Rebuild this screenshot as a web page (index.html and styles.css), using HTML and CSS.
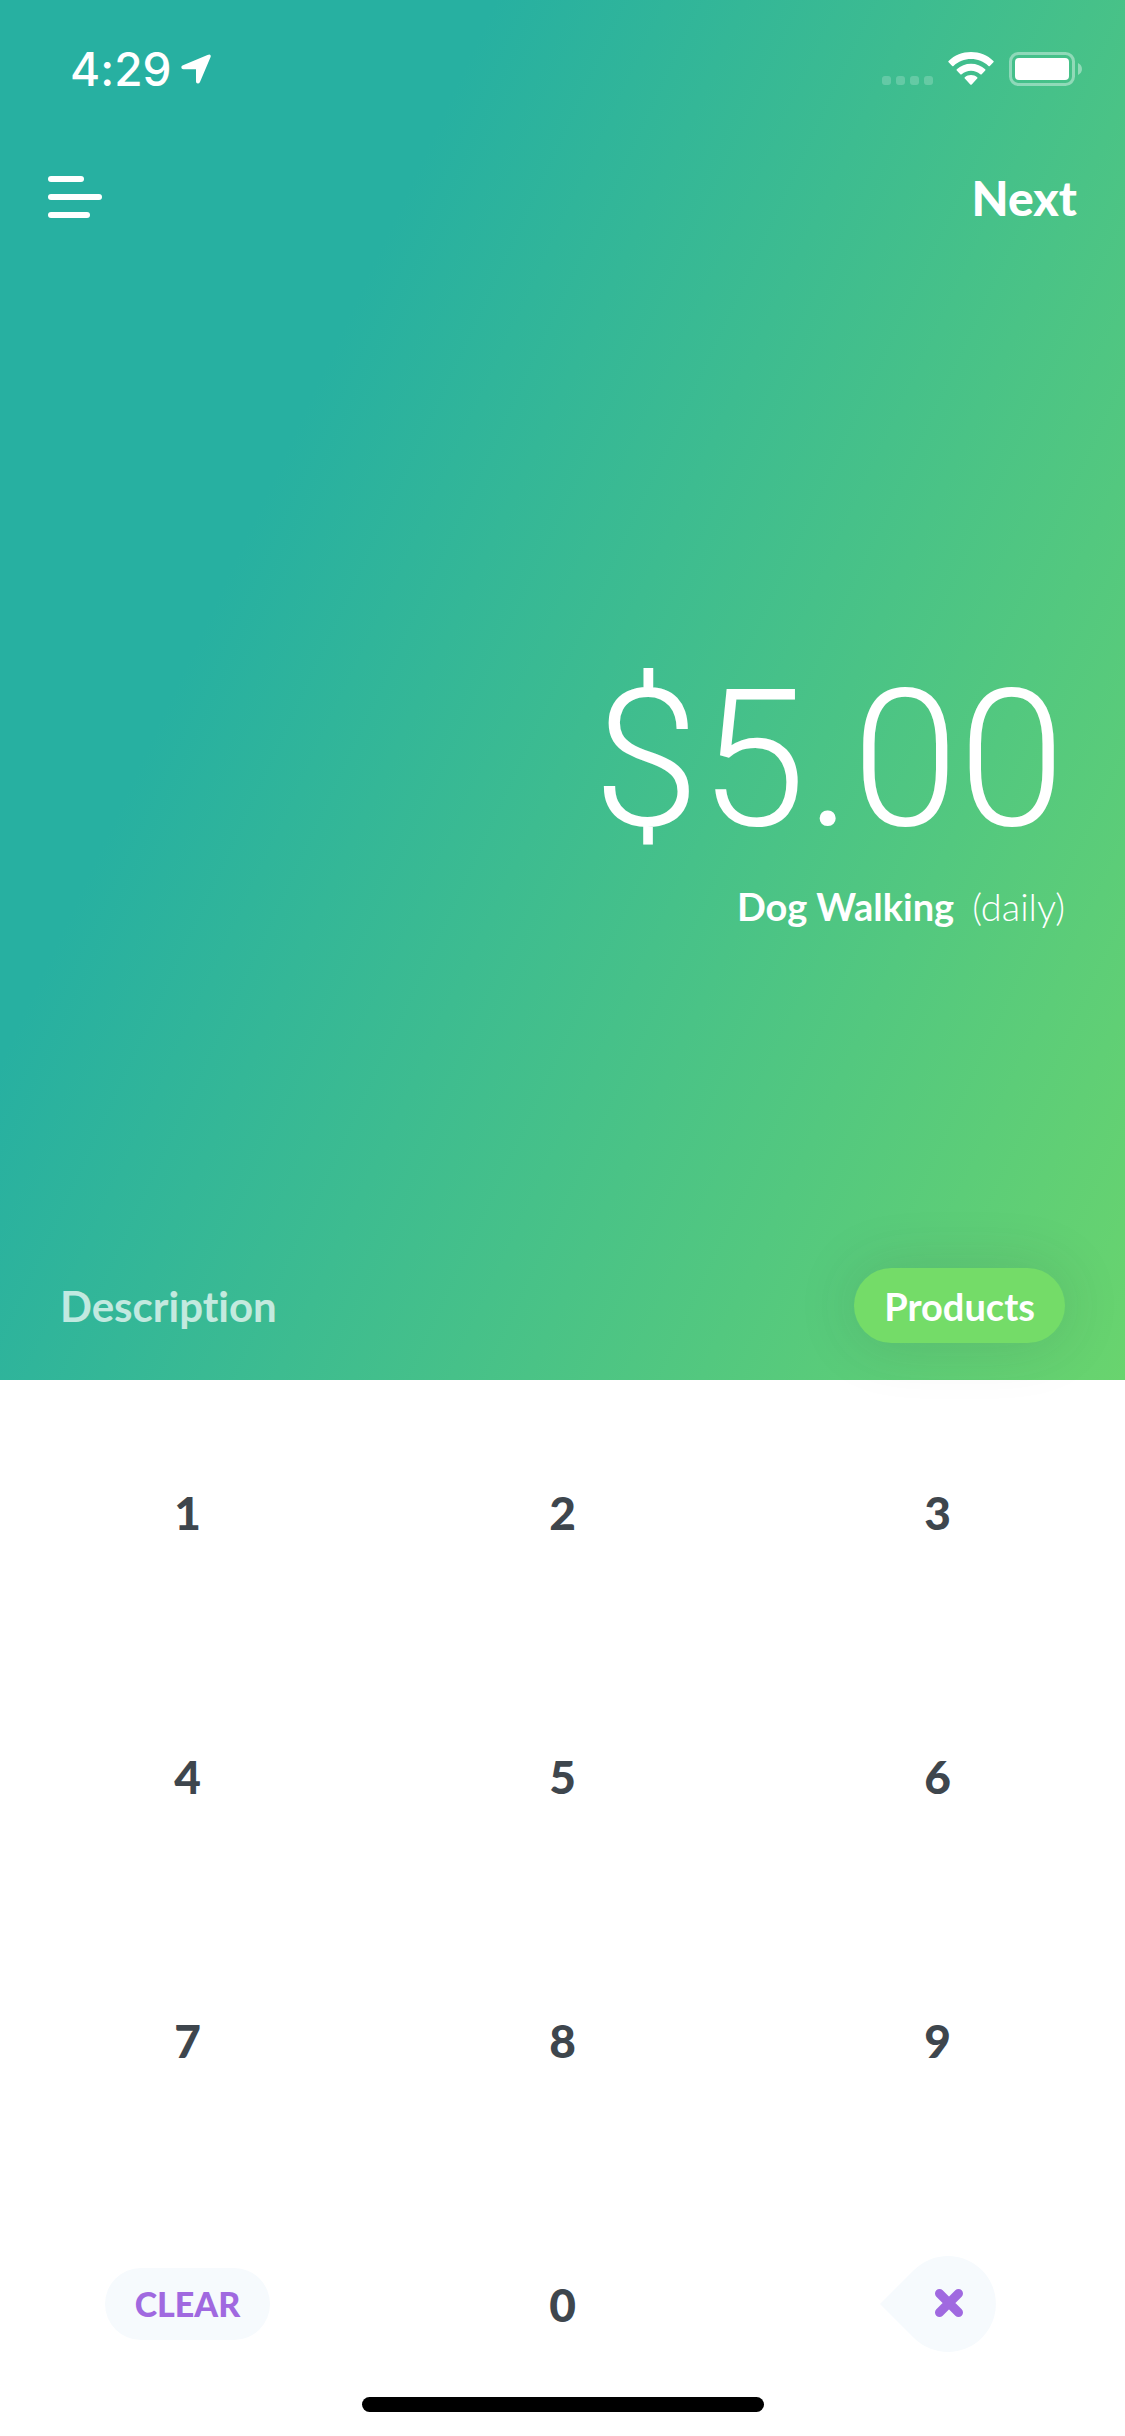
FILE: index.html
```html
<!DOCTYPE html>
<html lang="en">

<head>
  <meta charset="UTF-8">
  <meta name="viewport" content="width=device-width, initial-scale=1.0">
  <title>New Charge</title>
  <link rel="stylesheet" href="styles.css">
</head>

<body>
  <main id="hero">
    <div id="status-bar">
      <div class="status-left">
        <span class="time">4:29</span>
        <svg width="30" height="30" viewBox="0 0 30 30">
          <path d="M28.400 0.400 Q30.200 0.600 29.600 3 L19 28 Q18.300 29.600 16.800 29.600 Q15 29.400 15 27.400 L15 15.200 L2.400 15.200 Q0.300 15 0.300 13.200 Q0.300 11.900 2 11.200 L26.500 0.900 Q27.600 0.400 28.400 0.400 Z" fill="#fff"/>
        </svg>
      </div>
      <div class="status-right">
        <svg width="51" height="34" viewBox="0 0 51 34" fill="#fff" fill-opacity="0.2">
          <rect x="0" y="24" width="9" height="9" rx="3"/>
          <rect x="14" y="24" width="9" height="9" rx="3"/>
          <rect x="28" y="24" width="9" height="9" rx="3"/>
          <rect x="42" y="24" width="9" height="9" rx="3"/>
        </svg>
        <svg width="46" height="34" viewBox="0 0 46 34" fill="#fff">
          <path d="M23 0 C31.500 0 39.500 3.200 45.400 8.900 Q46.100 9.600 45.400 10.300 L41.800 13.900 Q41.200 14.500 40.500 13.900 C35.700 9.400 29.500 7 23 7 C16.500 7 10.300 9.400 5.500 13.900 Q4.800 14.500 4.200 13.900 L0.600 10.300 Q-0.100 9.600 0.600 8.900 C6.500 3.200 14.500 0 23 0 Z"/>
          <path d="M23 11.700 C28.400 11.700 33.400 13.700 37.200 17.200 Q37.900 17.900 37.200 18.600 L33.700 22.200 Q33 22.800 32.300 22.200 C29.700 19.900 26.500 18.700 23 18.700 C19.500 18.700 16.300 19.900 13.700 22.200 Q13 22.800 12.300 22.200 L8.800 18.600 Q8.100 17.900 8.800 17.200 C12.600 13.700 17.600 11.700 23 11.700 Z"/>
          <path d="M23 23 C25.400 23 27.500 23.800 29.200 25.200 Q29.900 25.900 29.200 26.600 L23.700 32.500 Q23 33.200 22.300 32.500 L16.800 26.600 Q16.100 25.900 16.800 25.200 C18.500 23.800 20.600 23 23 23 Z"/>
        </svg>
        <svg width="73" height="34" viewBox="0 0 73 34">
          <rect x="1.500" y="1.500" width="63" height="31" rx="8" fill="none" stroke="#fff" stroke-opacity="0.4" stroke-width="3"/>
          <rect x="6" y="6" width="54" height="22" rx="4" fill="#fff"/>
          <path d="M69 11 C74.300 13.500 74.300 20.500 69 23 Z" fill="#fff" fill-opacity="0.4"/>
        </svg>
      </div>
    </div>

    <header id="nav">
      <button class="menu" aria-label="Menu">
        <svg width="54" height="42" viewBox="0 0 54 42" fill="#fff">
          <rect width="36" height="6" rx="3"/>
          <rect y="18" width="54" height="6" rx="3"/>
          <rect y="36" width="42" height="6" rx="3"/>
        </svg>
      </button>
      <button class="next">Next</button>
    </header>

    <section id="charge">
      <div class="amount">$5.00</div>
      <div class="item"><b>Dog Walking</b><span>(daily)</span></div>
    </section>

    <div id="details">
      <input class="description" type="text" placeholder="Description" aria-label="Description">
      <button class="products">Products</button>
    </div>
  </main>

  <div id="keypad">
    <button>1</button>
    <button>2</button>
    <button>3</button>
    <button>4</button>
    <button>5</button>
    <button>6</button>
    <button>7</button>
    <button>8</button>
    <button>9</button>
    <button><span class="clear">CLEAR</span></button>
    <button>0</button>
    <button aria-label="Delete">
      <svg width="116" height="96" viewBox="0 0 116 96">
        <path d="M0 48 L34 14 A48 48 0 1 1 34 82 Z" fill="#f6fafd"/>
        <path d="M59.500 37.500 L78.500 56.500 M78.500 37.500 L59.500 56.500" stroke="#a069e0" stroke-width="9" stroke-linecap="round"/>
      </svg>
    </button>
  </div>

  <div id="home-indicator"></div>
</body>

</html>
```
FILE: styles.css
```css
* {
  box-sizing: border-box;
}

body {
  position: relative;
  display: flex;
  flex-direction: column;
  min-height: 100vh;
  margin: 0;
  background-color: white;
  color: white;
  font-family: Lato, sans-serif;
  font-variant-ligatures: none;
}

button,
input {
  padding: 0;
  border: none;
  background: none;
  color: inherit;
  font: inherit;
  font-variant-ligatures: none;
}

button {
  cursor: pointer;
}

svg {
  display: block;
}

#hero {
  position: relative;
  z-index: 1;
  flex: 1;
  display: flex;
  flex-direction: column;
  background: linear-gradient(115deg, #27b0a1 28%, #69d46e 100%);
}

#status-bar {
  display: flex;
  justify-content: space-between;
  align-items: center;
  height: 138px;
  padding: 0 43px 0 70px;
}

.status-left,
.status-right {
  display: flex;
  align-items: center;
}

.status-left {
  gap: 10px;
}

.status-right {
  gap: 15px;
}

.time {
  font-family: Inter, sans-serif;
  font-size: 46px;
  font-weight: 500;
}

#nav {
  display: flex;
  justify-content: space-between;
  align-items: center;
  height: 118px;
  padding: 0 48px;
}

.next {
  font-size: 48px;
  font-weight: 900;
}

#charge {
  flex: 1;
  display: flex;
  flex-direction: column;
  justify-content: center;
  align-items: flex-end;
  gap: 24px;
  padding: 68px 60px 0;
}

.amount {
  font-family: Roboto, sans-serif;
  font-size: 192px;
  font-weight: 300;
  line-height: 196px;
}

.item {
  display: flex;
  gap: 18px;
  font-size: 38px;
  line-height: 48px;
}

.item b {
  font-weight: 700;
}

.item span {
  font-weight: 300;
}

#details {
  display: flex;
  justify-content: space-between;
  align-items: center;
  gap: 48px;
  padding: 0 60px 37px;
}

.description {
  flex: 1;
  min-width: 0;
  font-size: 42px;
  font-weight: 700;
}

.description::placeholder {
  color: white;
  opacity: 0.7;
}

.products {
  height: 75px;
  padding: 0 30px;
  border-radius: 38px;
  background-color: #74dc68;
  box-shadow: 0 0 60px rgba(60, 60, 60, 0.15);
  font-size: 38px;
  font-weight: 700;
}

#keypad {
  display: grid;
  grid-template-columns: repeat(3, 1fr);
  grid-auto-rows: 264px;
}

#keypad button {
  display: flex;
  justify-content: center;
  align-items: center;
  color: #3e464d;
  font-size: 46px;
  font-weight: 900;
}

#keypad .clear {
  padding: 0 30px;
  border-radius: 36px;
  background-color: #f6fafd;
  color: #a069e0;
  font-size: 34px;
  font-weight: 900;
  line-height: 72px;
}

#home-indicator {
  position: absolute;
  z-index: 2;
  bottom: 24px;
  left: 50%;
  width: 402px;
  height: 15px;
  border-radius: 8px;
  background-color: black;
  transform: translateX(-50%);
}
```
